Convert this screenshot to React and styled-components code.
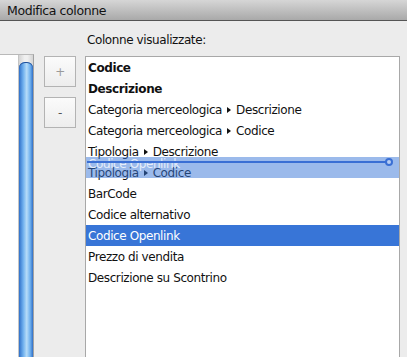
import React from 'react';
import styled, { createGlobalStyle } from 'styled-components';

const GlobalStyle = createGlobalStyle`
  html, body {
    margin: 0;
    padding: 0;
    background: #ececec;
  }
  body {
    font-family: 'DejaVu Sans', 'Liberation Sans', sans-serif;
    letter-spacing: -0.4px;
  }
`;

const Window = styled.div`
  width: 407px;
  height: 357px;
  display: flex;
  flex-direction: column;
  background: #ececec;
  overflow: hidden;
`;

const TitleBar = styled.div`
  height: 20px;
  display: flex;
  align-items: center;
  padding-left: 7px;
  font-size: 12.5px;
  color: #111;
  background: linear-gradient(to bottom, #d6d6d6, #a9a9a9);
  border-bottom: 1px solid #555;
`;

const Body = styled.div`
  flex: 1;
  display: flex;
  flex-flow: row nowrap;
  min-height: 0;
`;

const SourcePanel = styled.div`
  width: 33px;
  margin-top: 33px;
  display: flex;
  background: #fff;
  border-top: 1px solid #b9b9b9;
  border-right: 1px solid #a2a2a2;
`;

const Track = styled.div`
  margin-left: 18px;
  width: 14px;
  display: flex;
  justify-content: center;
  padding-top: 7px;
  border-left: 1px solid #c4c4c4;
  background: linear-gradient(to right, #d4d4d4, #f0f0f0 40%, #f0f0f0 60%, #d4d4d4);
`;

const Thumb = styled.div`
  width: 11px;
  flex: 1;
  border-radius: 6px 6px 0 0;
  background: linear-gradient(to right, #2f6fc8, #6fb0ee 30%, #b6dcf8 55%, #6fb0ee 80%, #2f6fc8);
  box-shadow: inset 0 1px 0 #1f4f9a;
`;

const ButtonColumn = styled.div`
  display: flex;
  flex-direction: column;
  gap: 10px;
  margin-left: 10px;
  padding-top: 35px;
`;

const SquareButton = styled.div`
  width: 30px;
  height: 29px;
  display: flex;
  align-items: center;
  justify-content: center;
  border: 1px solid #b3b3b3;
  background: linear-gradient(to bottom, #fbfbfb, #ededed);
  color: ${(p) => (p.dim ? '#9a9a9a' : '#555')};
  font-size: 12px;
`;

const ListColumn = styled.div`
  display: flex;
  flex-direction: column;
  margin-left: 9px;
  width: 315px;
  padding-top: 11px;
`;

const Label = styled.div`
  height: 16px;
  padding-left: 2px;
  font-size: 12px;
  line-height: 16px;
  color: #111;
`;

const ListBox = styled.div`
  position: relative;
  flex: 1;
  margin-top: 8px;
  background: #fff;
  border: 1px solid #a8a8a8;
  border-bottom: none;
`;

const Row = styled.div`
  height: 21px;
  display: flex;
  align-items: center;
  padding-left: 2px;
  font-size: 12px;
  white-space: nowrap;
  font-weight: ${(p) => (p.bold ? 'bold' : 'normal')};
  color: ${(p) => (p.selected ? '#fff' : '#111')};
  background: ${(p) => (p.selected ? '#3875d7' : 'transparent')};
`;

const Arrow = styled.span`
  display: inline-block;
  width: 0;
  height: 0;
  margin: 0 5px 0 5px;
  border-top: 3px solid transparent;
  border-bottom: 3px solid transparent;
  border-left: 4px solid currentColor;
`;

const DragImage = styled.div`
  position: absolute;
  left: 0;
  right: 0;
  top: 100px;
  height: 21px;
  padding-left: 2px;
  font-size: 12px;
  line-height: 14px;
  color: rgba(255, 255, 255, 0.75);
  background: rgba(56, 117, 215, 0.5);
`;

const DropLine = styled.div`
  position: absolute;
  left: 1px;
  width: 299px;
  top: 104px;
  height: 2px;
  background: #3a6fd4;
`;

const DropRing = styled.div`
  position: absolute;
  left: 299px;
  top: 101px;
  width: 4px;
  height: 4px;
  border: 2px solid #3a6fd4;
  border-radius: 50%;
  background: #b8cdf1;
`;

const rows = [
  { parts: ['Codice'], bold: true },
  { parts: ['Descrizione'], bold: true },
  { parts: ['Categoria merceologica', 'Descrizione'] },
  { parts: ['Categoria merceologica', 'Codice'] },
  { parts: ['Tipologia', 'Descrizione'] },
  { parts: ['Tipologia', 'Codice'] },
  { parts: ['BarCode'] },
  { parts: ['Codice alternativo'] },
  { parts: ['Codice Openlink'], selected: true },
  { parts: ['Prezzo di vendita'] },
  { parts: ['Descrizione su Scontrino'] },
];

export default function App() {
  return (
    <Window>
      <GlobalStyle />
      <TitleBar>Modifica colonne</TitleBar>
      <Body>
        <SourcePanel>
          <Track>
            <Thumb />
          </Track>
        </SourcePanel>
        <ButtonColumn>
          <SquareButton dim>+</SquareButton>
          <SquareButton>-</SquareButton>
        </ButtonColumn>
        <ListColumn>
          <Label>Colonne visualizzate:</Label>
          <ListBox>
            {rows.map((row, i) => (
              <Row key={i} bold={row.bold} selected={row.selected}>
                {row.parts.map((part, j) => (
                  <React.Fragment key={j}>
                    {j > 0 && <Arrow />}
                    {part}
                  </React.Fragment>
                ))}
              </Row>
            ))}
            <DragImage>Codice Openlink</DragImage>
            <DropLine />
            <DropRing />
          </ListBox>
        </ListColumn>
      </Body>
    </Window>
  );
}
